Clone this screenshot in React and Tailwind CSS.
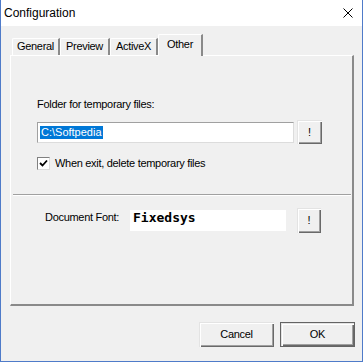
import React from "react";

const raised =
  "bg-[#f0f0f0] shadow-[inset_1px_1px_0_#e3e3e3,inset_2px_2px_0_#ffffff,inset_-1px_-1px_0_#696969,inset_-2px_-2px_0_#a0a0a0]";

function Tab({ label, active, w }) {
  return active ? (
    <div
      className={`${w} relative z-10 -mb-px h-[22px] flex justify-center pt-[3px] bg-[#f0f0f0] border-l border-t border-white border-r-2 border-r-[#8a8a8a] rounded-tl-[2px]`}
    >
      {label}
    </div>
  ) : (
    <div
      className={`${w} h-[17px] flex justify-center pt-[1px] bg-[#f0f0f0] border-l border-t border-white border-r-2 border-r-[#8a8a8a] rounded-tl-[2px]`}
    >
      {label}
    </div>
  );
}

function Check() {
  return (
    <div className="w-[13px] h-[13px] bg-white border border-t-[#808080] border-l-[#808080] border-r-[#dcdcdc] border-b-[#dcdcdc] flex items-center justify-center">
      <svg width="9" height="9" viewBox="0 0 9 9">
        <path d="M1 4 L3.5 6.5 L8 1.5" fill="none" stroke="#000" strokeWidth="1.8" />
      </svg>
    </div>
  );
}

export default function App() {
  return (
    <div className="w-[363px] h-[362px] flex flex-col bg-[#f0f0f0] border-l border-r border-b border-[#4f7bc9] font-['Liberation_Sans',Arial,sans-serif] text-[11px] leading-[13px] text-black tracking-[-0.3px] overflow-hidden">
      {/* title bar */}
      <div className="h-[26px] shrink-0 bg-white flex items-center justify-between pl-[3px] pr-[9px]">
        <span className="text-[12px] tracking-normal">Configuration</span>
        <svg width="10" height="10" viewBox="0 0 10 10">
          <path d="M0.5 0.5 L9.5 9.5 M9.5 0.5 L0.5 9.5" stroke="#000" strokeWidth="1" />
        </svg>
      </div>

      {/* tabs */}
      <div className="mt-[8px] ml-[11px] flex items-end h-[21px]">
        <Tab label="General" w="w-[48px]" />
        <Tab label="Preview" w="w-[50px]" />
        <Tab label="ActiveX" w="w-[48px]" />
        <Tab label="Other" w="w-[45px]" active />
      </div>

      {/* panel */}
      <div className="relative ml-[9px] w-[344px] h-[251px] shrink-0 border-l border-t border-white border-r-2 border-b-2 border-r-[#8a8a8a] border-b-[#8a8a8a] flex flex-col">
        <div className="ml-[26px] mt-[42px]">Folder for temporary files:</div>

        <div className="ml-[26px] mt-[9px] flex items-center">
          <div className="w-[257px] h-[21px] bg-white border border-t-[#a0a0a0] border-l-[#a0a0a0] border-r-[#dcdcdc] border-b-[#dcdcdc] flex items-center pl-[2px]">
            <span className="bg-[#0078d7] text-white tracking-normal px-px">C:\Softpedia</span>
          </div>
          <div className={`ml-[3px] w-[25px] h-[24px] flex items-center justify-center ${raised}`}>!</div>
        </div>

        <div className="ml-[26px] mt-[13px] flex items-center gap-[5px]">
          <Check />
          <span>When exit, delete temporary files</span>
        </div>

        <div className="ml-[2px] mr-[1px] mt-[24px] border-t border-t-[#a0a0a0] border-b border-b-white" />

        <div className="mt-[12px] ml-[34px] flex items-start">
          <div className="w-[85px] mt-[3px]">Document Font:</div>
          <div className="w-[156px] h-[21px] mt-[2px] bg-white pl-[3px]">
            <span className="font-['DejaVu_Sans_Mono',monospace] font-bold text-[13px] leading-[15px] tracking-normal">
              Fixedsys
            </span>
          </div>
          <div className={`ml-[11px] w-[24px] h-[25px] flex items-center justify-center ${raised}`}>!</div>
        </div>
      </div>

      {/* buttons */}
      <div className="mt-[16px] pr-[7px] flex justify-end gap-[6px]">
        <div className={`w-[75px] h-[25px] flex items-center justify-center ${raised}`}>Cancel</div>
        <div className={`w-[75px] h-[25px] flex items-center justify-center border border-[#646464] ${raised}`}>OK</div>
      </div>
    </div>
  );
}
